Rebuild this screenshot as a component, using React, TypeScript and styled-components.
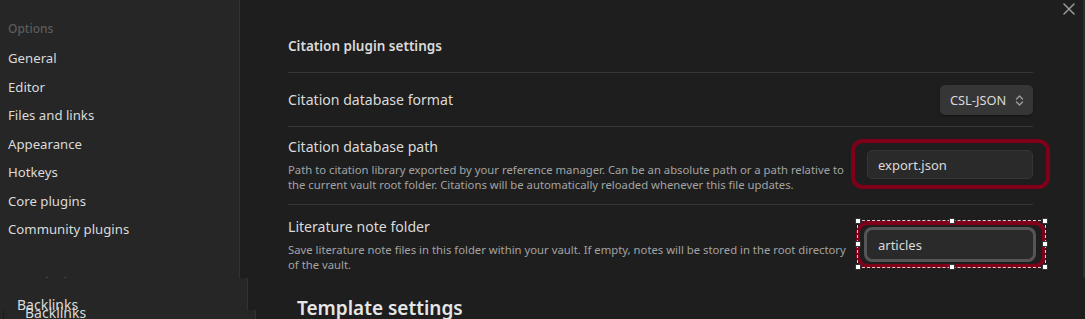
import React from 'react';
import styled, { createGlobalStyle } from 'styled-components';

const GlobalStyle = createGlobalStyle`
  html, body {
    margin: 0;
    padding: 0;
    background: #1e1e1e;
    font-family: 'Noto Sans', 'Open Sans', sans-serif;
    color: #dadada;
    overflow: hidden;
  }
  * { box-sizing: border-box; }
`;

const Page = styled.div`
  position: relative;
  display: flex;
  width: 100vw;
  height: 100vh;
  overflow: hidden;
`;

const Sidebar = styled.nav`
  width: 240px;
  flex-shrink: 0;
  background: #262626;
  border-right: 1px solid #333333;
  padding-top: 18px;
`;

const GroupTitle = styled.div<{ $gap?: number }>`
  height: 22px;
  line-height: 22px;
  margin-top: ${(p) => p.$gap ?? 0}px;
  margin-bottom: 4px;
  padding-left: 8px;
  font-size: 12px;
  font-weight: 500;
  color: #5c5c5c;
`;

const NavItem = styled.div`
  height: 28.5px;
  display: flex;
  align-items: center;
  padding-left: 8px;
  font-size: 13.2px;
  color: #dadada;
`;

const Main = styled.main`
  flex: 1;
  background: #1e1e1e;
  padding: 34px 52px 0 48px;
`;

const Heading = styled.div`
  font-size: 13.5px;
  font-weight: 600;
  line-height: 24px;
  padding-bottom: 14px;
  color: #dadada;
`;

const SettingItem = styled.div<{ $top: number; $bottom: number }>`
  display: flex;
  align-items: center;
  border-top: 1px solid #363636;
  padding: ${(p) => p.$top}px 0 ${(p) => p.$bottom}px;
`;

const Info = styled.div`
  flex: 1;
  min-width: 0;
`;

const Name = styled.div`
  font-size: 14.1px;
  line-height: 20px;
  color: #dadada;
`;

const Description = styled.div`
  margin-top: 5px;
  font-size: 11.3px;
  line-height: 15px;
  color: #a3a3a3;
`;

const Control = styled.div`
  position: relative;
  margin-left: 18px;
  flex-shrink: 0;
`;

const Dropdown = styled.div`
  width: 93px;
  height: 30px;
  display: flex;
  align-items: center;
  justify-content: space-between;
  padding: 0 9px 0 10px;
  background: #363636;
  border-radius: 5px;
  box-shadow: 0 1px 2px rgba(0, 0, 0, 0.35);
  font-size: 12.8px;
  color: #dadada;
`;

const TextInput = styled.div<{ $focused?: boolean }>`
  width: 166px;
  height: 29px;
  display: flex;
  align-items: center;
  padding-left: 10px;
  background: #2a2a2a;
  border: 1px solid ${(p) => (p.$focused ? '#2a2a2a' : '#353535')};
  border-radius: 5px;
  box-shadow: ${(p) => (p.$focused ? '0 0 0 3px #555555' : 'none')};
  font-size: 13px;
  color: #dadada;
`;

const Annotation = styled.div<{ $t: number; $r: number; $b: number; $l: number }>`
  position: absolute;
  top: ${(p) => -p.$t}px;
  right: ${(p) => -p.$r}px;
  bottom: ${(p) => -p.$b}px;
  left: ${(p) => -p.$l}px;
  border: 4px solid #80001a;
  border-radius: 12px;
  pointer-events: none;
`;

const Selection = styled.div`
  position: absolute;
  top: -10px;
  right: -13px;
  bottom: -9px;
  left: -10px;
  border: 1px dashed #e8c8cc;
  pointer-events: none;
`;

const Handle = styled.span<{ $x: number; $y: number }>`
  position: absolute;
  left: ${(p) => p.$x}%;
  top: ${(p) => p.$y}%;
  width: 6px;
  height: 6px;
  margin: -3px 0 0 -3px;
  background: #ffffff;
  border: 1px solid #333333;
`;

const SectionTitle = styled.div`
  margin-top: 11px;
  padding-left: 9px;
  font-size: 19px;
  font-weight: 600;
  line-height: 26px;
  color: #e6e6e6;
`;

const CloseButton = styled.div`
  position: absolute;
  top: 2px;
  left: 1062px;
  width: 13px;
  height: 13px;
  display: flex;
  align-items: center;
  justify-content: center;
`;

const ScrollThumb = styled.div`
  position: absolute;
  top: 0;
  right: 0;
  width: 2px;
  height: 278px;
  background: #2c2c2c;
`;

const DragGhost = styled.div`
  position: absolute;
  left: 0;
  top: 278px;
  width: 248px;
  height: 41px;
  background: #262626;
  border-right: 1px solid #333333;
`;

const DragGhostTail = styled.div`
  position: absolute;
  left: 3px;
  top: 310px;
  width: 253px;
  height: 9px;
  background: #262626;
  border-left: 1px solid #1a1a1a;
  border-right: 1px solid #333333;
`;

const GhostLabel = styled.div<{ $x: number; $y: number }>`
  position: absolute;
  left: ${(p) => p.$x}px;
  top: ${(p) => p.$y}px;
  font-size: 14px;
  line-height: 18px;
  color: #dadada;
`;

const navItems = ['General', 'Editor', 'Files and links', 'Appearance', 'Hotkeys', 'Core plugins', 'Community plugins'];

const handles = [
  [0, 0], [50, 0], [100, 0],
  [0, 50], [100, 50],
  [0, 100], [50, 100], [100, 100],
];

const Chevrons = () => (
  <svg width="9" height="13" viewBox="0 0 9 13" fill="none" stroke="#a0a0a0" strokeWidth="1.3" strokeLinecap="round" strokeLinejoin="round">
    <path d="M1.5 5 L4.5 2 L7.5 5" />
    <path d="M1.5 8 L4.5 11 L7.5 8" />
  </svg>
);

const App: React.FC = () => {
  return (
    <>
      <GlobalStyle />
      <Page>
        <Sidebar>
          <GroupTitle>Options</GroupTitle>
          {navItems.map((item) => (
            <NavItem key={item}>{item}</NavItem>
          ))}
          <GroupTitle $gap={28}>Core plugins</GroupTitle>
        </Sidebar>

        <Main>
          <Heading>Citation plugin settings</Heading>

          <SettingItem $top={12} $bottom={11}>
            <Info>
              <Name>Citation database format</Name>
            </Info>
            <Control>
              <Dropdown>
                <span>CSL-JSON</span>
                <Chevrons />
              </Dropdown>
            </Control>
          </SettingItem>

          <SettingItem $top={10} $bottom={12}>
            <Info>
              <Name>Citation database path</Name>
              <Description>
                Path to citation library exported by your reference manager. Can be an absolute path or a path relative to
                the current vault root folder. Citations will be automatically reloaded whenever this file updates.
              </Description>
            </Info>
            <Control>
              <TextInput>export.json</TextInput>
              <Annotation $t={11} $r={17} $b={10} $l={16} />
            </Control>
          </SettingItem>

          <SettingItem $top={12} $bottom={12}>
            <Info>
              <Name>Literature note folder</Name>
              <Description>
                Save literature note files in this folder within your vault. If empty, notes will be stored in the root directory
                of the vault.
              </Description>
            </Info>
            <Control>
              <TextInput $focused>articles</TextInput>
              <Annotation $t={9} $r={13} $b={9} $l={11} />
              <Selection>
                {handles.map(([x, y]) => (
                  <Handle key={`${x}-${y}`} $x={x} $y={y} />
                ))}
              </Selection>
            </Control>
          </SettingItem>

          <SectionTitle>Template settings</SectionTitle>
        </Main>

        <CloseButton>
          <svg width="12" height="12" viewBox="0 0 12 12" stroke="#9a9a9a" strokeWidth="1.5" strokeLinecap="round">
            <path d="M1 1 L11 11 M11 1 L1 11" />
          </svg>
        </CloseButton>
        <ScrollThumb />

        <DragGhost />
        <DragGhostTail />
        <GhostLabel $x={17} $y={296}>Backlinks</GhostLabel>
        <GhostLabel $x={25} $y={304}>Backlinks</GhostLabel>
      </Page>
    </>
  );
};

export default App;
